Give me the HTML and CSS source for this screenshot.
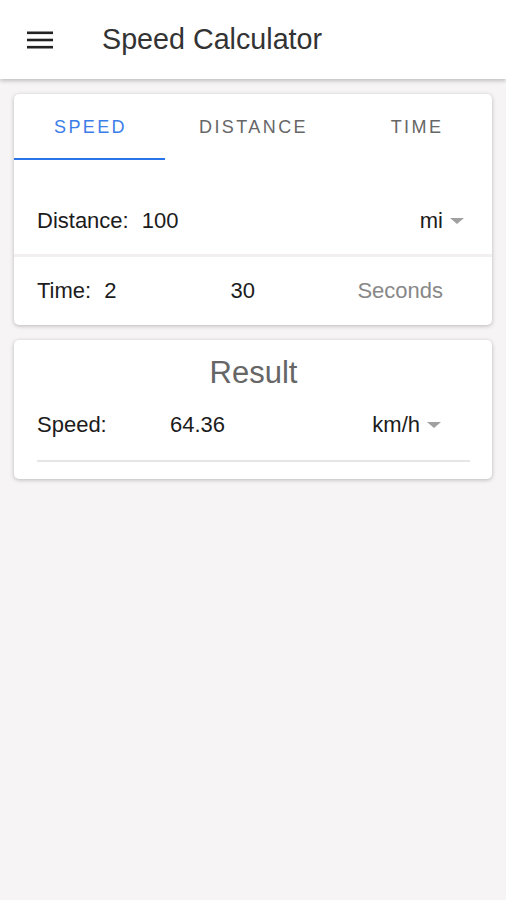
FILE: index.html
```html
<!DOCTYPE html>
<html lang="en">
<head>
  <meta charset="UTF-8" />
  <meta name="viewport" content="width=device-width, initial-scale=1" />
  <title>Speed Calculator</title>
  <link rel="stylesheet" href="styles.css">
</head>
<body>

  <header class="app-bar">
    <svg class="menu-icon" width="26" height="18" viewBox="0 0 26 18">
      <rect x="0" y="0.5" width="26" height="2.6" fill="#222" />
      <rect x="0" y="7.7" width="26" height="2.6" fill="#222" />
      <rect x="0" y="14.9" width="26" height="2.6" fill="#222" />
    </svg>
    <h1 class="app-title">Speed Calculator</h1>
  </header>

  <main class="content">
    <section class="card">
      <nav class="tabs">
        <div class="tab tab-speed active">Speed</div>
        <div class="tab tab-distance">Distance</div>
        <div class="tab tab-time">Time</div>
      </nav>

      <div class="row row-distance">
        <span class="label">Distance:</span>
        <span class="value">100</span>
        <span class="unit">mi <span class="caret"></span></span>
      </div>

      <div class="row row-time">
        <span class="label">Time:</span>
        <span class="value value-hours">2</span>
        <span class="value value-minutes">30</span>
        <span class="placeholder">Seconds</span>
      </div>
    </section>

    <section class="card result">
      <h2 class="result-title">Result</h2>
      <div class="result-row">
        <span class="label label-speed">Speed:</span>
        <span class="value value-speed">64.36</span>
        <span class="unit">km/h <span class="caret"></span></span>
      </div>
    </section>
  </main>

</body>
</html>
```

FILE: styles.css
```css
* {
  box-sizing: border-box;
  margin: 0;
  padding: 0;
}

body {
  font-family: 'Liberation Sans', Arial, sans-serif;
  background: #f6f4f5;
  color: #1c1c1c;
}

.app-bar {
  height: 79px;
  background: #fff;
  display: flex;
  align-items: center;
  padding-left: 27px;
  box-shadow: 0 2px 4px rgba(0, 0, 0, 0.22);
}

.menu-icon {
  display: block;
}

.app-title {
  margin-left: 49px;
  font-size: 28.7px;
  font-weight: 400;
  color: #333;
}

.content {
  padding: 15px 14px;
  display: flex;
  flex-direction: column;
  gap: 15px;
}

.card {
  background: #fff;
  border-radius: 5px;
  box-shadow: 0 1px 4px rgba(0, 0, 0, 0.25);
}

.tabs {
  display: flex;
  height: 66px;
}

.tab {
  display: flex;
  align-items: center;
  justify-content: center;
  padding: 2px 0 0 2px;
  text-transform: uppercase;
  font-size: 18px;
  letter-spacing: 2.4px;
  color: #666;
  border-bottom: 2px solid transparent;
}

.tab-speed {
  width: 151px;
}

.tab-distance {
  width: 175px;
}

.tab-time {
  flex: 1;
}

.tab.active {
  color: #3b7ee9;
  border-bottom-color: #2a74ea;
}

.row {
  display: flex;
  align-items: center;
  padding: 0 28px 0 23px;
  font-size: 22px;
}

.row-distance {
  height: 97px;
  padding-top: 28px;
  border-bottom: 3px solid #f1eff0;
}

.row-time {
  height: 68px;
  padding-right: 49px;
}

.label {
  margin-right: 13px;
}

.value-minutes {
  margin-left: 114px;
}

.placeholder {
  margin-left: auto;
  color: #888;
}

.unit {
  margin-left: auto;
  display: flex;
  align-items: center;
}

.caret {
  width: 0;
  height: 0;
  margin-left: 7px;
  border-left: 7px solid transparent;
  border-right: 7px solid transparent;
  border-top: 6px solid #a0a0a0;
}

.result {
  padding: 16px 22px 17px 23px;
}

.result-title {
  text-align: center;
  font-size: 31px;
  font-weight: 400;
  color: #666;
  line-height: 34px;
}

.result-row {
  display: flex;
  align-items: center;
  font-size: 22px;
  height: 72px;
  padding-right: 29px;
  border-bottom: 2px solid #e6e6e6;
}

.label-speed {
  width: 133px;
  margin-right: 0;
}
```
